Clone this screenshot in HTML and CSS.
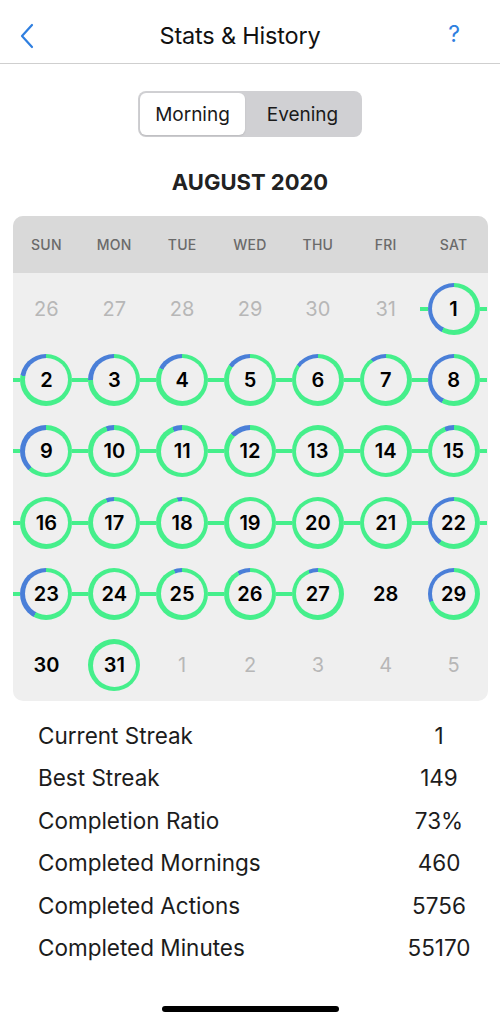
FILE: index.html
```html
<!DOCTYPE html>
<html lang="en">
<head>
    <meta charset="UTF-8">
    <meta name="viewport" content="width=device-width, initial-scale=1.0">
    <title>Stats &amp; History</title>
    <link rel="stylesheet" href="styles.css">
</head>
<body>
    <nav class="topbar">
        <span class="nav-back">
            <svg width="14" height="26" viewBox="0 0 14 26"><path d="M12 2 L2 13 L12 24" fill="none" stroke="#2f7fe0" stroke-width="2.2" stroke-linecap="round" stroke-linejoin="round"/></svg>
        </span>
        <h1 class="nav-title">Stats &amp; History</h1>
        <span class="nav-help">?</span>
    </nav>

    <main>
        <div class="segmented">
            <span class="seg active">Morning</span>
            <span class="seg">Evening</span>
        </div>

        <h2 class="month">AUGUST 2020</h2>

        <div class="calendar">
            <div class="weekdays">
                <span>SUN</span><span>MON</span><span>TUE</span><span>WED</span><span>THU</span><span>FRI</span><span>SAT</span>
            </div>
            <div class="days" id="days">
                <!-- days are inserted by script -->
            </div>
        </div>

        <table class="stats">
            <tr><td>Current Streak</td><td>1</td></tr>
            <tr><td>Best Streak</td><td>149</td></tr>
            <tr><td>Completion Ratio</td><td>73%</td></tr>
            <tr><td>Completed Mornings</td><td>460</td></tr>
            <tr><td>Completed Actions</td><td>5756</td></tr>
            <tr><td>Completed Minutes</td><td>55170</td></tr>
        </table>
    </main>

    <div class="home-bar"></div>

    <script>
        // blue part of each ring (share of the circle), null = not done
        const august = {
            1: 0.42, 2: 0.22, 3: 0.25, 4: 0.17, 5: 0.15, 6: 0.15, 7: 0.1,
            8: 0.42, 9: 0.38, 10: 0.05, 11: 0.06, 12: 0.13, 13: 0, 14: 0,
            15: 0.06, 16: 0, 17: 0.05, 18: 0.03, 19: 0, 20: 0, 21: 0,
            22: 0.4, 23: 0.42, 24: 0, 25: 0.05, 26: 0.08, 27: 0.06, 28: null,
            29: 0.3, 30: null, 31: 0
        };
        // streak links to the previous / next day
        const linkLeft = [1, 2, 3, 4, 5, 6, 7, 8, 9, 10, 11, 12, 13, 14, 15, 16, 17, 18, 19, 20, 21, 22, 23, 24, 25, 26, 27];
        const linkRight = [1, 2, 3, 4, 5, 6, 7, 8, 9, 10, 11, 12, 13, 14, 15, 16, 17, 18, 19, 20, 21, 22, 23, 24, 25, 26];

        function buildDays() {
            const box = document.getElementById('days');
            let html = '';
            [26, 27, 28, 29, 30, 31].forEach(d => {
                html += `<div class="day other"><span class="num">${d}</span></div>`;
            });
            for (let d = 1; d <= 31; d++) {
                const blue = august[d];
                const left = linkLeft.includes(d) ? 'link' : '';
                const right = linkRight.includes(d) ? 'link' : '';
                if (blue === null) {
                    html += `<div class="day"><span class="num bold">${d}</span></div>`;
                } else {
                    html += `<div class="day">
                        <span class="line ${left}"></span>
                        <span class="ring" style="--blue: ${(blue * 100).toFixed(1)}%"><span class="num bold">${d}</span></span>
                        <span class="line ${right}"></span>
                    </div>`;
                }
            }
            [1, 2, 3, 4, 5].forEach(d => {
                html += `<div class="day other"><span class="num">${d}</span></div>`;
            });
            box.innerHTML = html;
        }

        buildDays();
    </script>
</body>
</html>
```

FILE: styles.css
```css
body {
    font-family: Inter, "Liberation Sans", sans-serif;
    margin: 0;
    padding: 0;
    background-color: #fff;
    color: #111;
}
.topbar {
    height: 55px;
    padding-top: 8px;
    display: flex;
    align-items: center;
    justify-content: space-between;
    border-bottom: 1px solid #cfcfcf;
    padding-left: 20px;
    padding-right: 40px;
}
.nav-back {
    width: 40px;
    display: flex;
    align-items: center;
}
.nav-title {
    margin: 0;
    font-size: 23.5px;
    font-weight: 400;
    letter-spacing: -0.2px;
}
.nav-help {
    width: 40px;
    text-align: right;
    color: #2f7fe0;
    font-size: 23px;
    margin-top: -4px;
}
main {
    display: flex;
    flex-direction: column;
    align-items: center;
}
.segmented {
    margin-top: 27px;
    display: flex;
    width: 224px;
    height: 46px;
    padding: 2px;
    box-sizing: border-box;
    background-color: #d0d0d3;
    border-radius: 8px;
}
.seg {
    flex: 1;
    display: flex;
    align-items: center;
    justify-content: center;
    font-size: 19px;
    color: #1a1a1a;
    border-radius: 6px;
}
.seg.active {
    background-color: #fff;
    flex: 0 0 105px;
    box-shadow: 0 1px 2px rgba(0, 0, 0, 0.1);
}
.month {
    margin: 33px 0 0;
    line-height: 24px;
    font-size: 22px;
    font-weight: 700;
    color: #222;
}
.calendar {
    margin-top: 22px;
    width: 475px;
    background-color: #efefef;
    border-radius: 10px;
    overflow: hidden;
}
.weekdays {
    display: grid;
    grid-template-columns: repeat(7, 1fr);
    height: 57px;
    align-items: center;
    background-color: #d9d9d9;
}
.weekdays span {
    text-align: center;
    font-size: 14px;
    font-weight: 500;
    color: #6a6a6a;
    letter-spacing: 0.3px;
}
.days {
    display: grid;
    grid-template-columns: repeat(7, 1fr);
    grid-auto-rows: 71.33px;
}
.day {
    display: flex;
    align-items: center;
    justify-content: center;
}
.line {
    flex: 1;
    height: 4px;
}
.line.link {
    background-color: #45ef8b;
}
.ring {
    width: 52px;
    height: 52px;
    box-sizing: border-box;
    padding: 4.5px;
    border-radius: 50%;
    background: conic-gradient(#45ef8b 0 calc(100% - var(--blue)), #4a7fd8 0);
    display: flex;
}
.ring .num {
    flex: 1;
    border-radius: 50%;
    background-color: #efefef;
    display: flex;
    align-items: center;
    justify-content: center;
}
.num {
    font-size: 20px;
    color: #b7b7b7;
}
.num.bold {
    font-size: 20px;
    font-weight: 600;
    color: #000;
}
.stats {
    margin-top: 13px;
    width: 100%;
    border-collapse: collapse;
}
.stats td {
    height: 42.5px;
    padding: 0;
    font-size: 22.5px;
    color: #1c1c1c;
}
.stats td:first-child {
    padding-left: 38px;
}
.stats td:last-child {
    width: 122px;
    text-align: center;
}
.home-bar {
    position: absolute;
    left: 162px;
    top: 1006px;
    width: 177px;
    height: 6px;
    border-radius: 3px;
    background-color: #000;
}
```
